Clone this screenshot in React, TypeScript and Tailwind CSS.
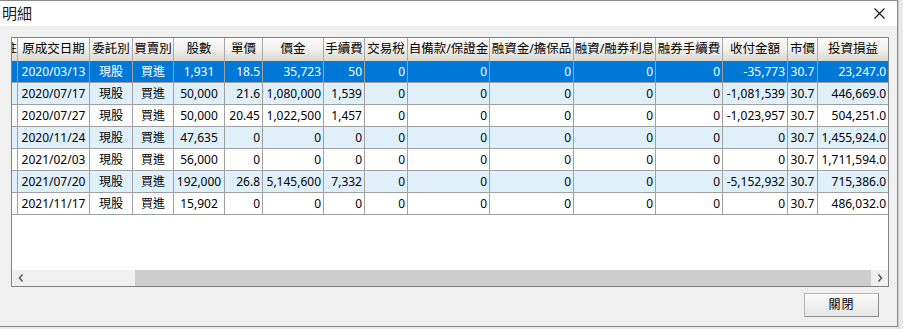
import React from 'react';

const font = { fontFamily: '"Noto Sans", "Noto Sans CJK TC", sans-serif' };

type Col = { title: string; w: string; align: 'c' | 'r' };

const cols: Col[] = [
  { title: '註', w: 'w-[6px]', align: 'r' },
  { title: '原成交日期', w: 'w-[72px]', align: 'c' },
  { title: '委託別', w: 'w-[43px]', align: 'c' },
  { title: '買賣別', w: 'w-[41px]', align: 'c' },
  { title: '股數', w: 'w-[51px]', align: 'c' },
  { title: '單價', w: 'w-[38px]', align: 'r' },
  { title: '價金', w: 'w-[61px]', align: 'r' },
  { title: '手續費', w: 'w-[41px]', align: 'r' },
  { title: '交易稅', w: 'w-[43px]', align: 'r' },
  { title: '自備款/保證金', w: 'w-[82px]', align: 'r' },
  { title: '融資金/擔保品', w: 'w-[84px]', align: 'r' },
  { title: '融資/融券利息', w: 'w-[82px]', align: 'r' },
  { title: '融券手續費', w: 'w-[67px]', align: 'r' },
  { title: '收付金額', w: 'w-[65px]', align: 'r' },
  { title: '市價', w: 'w-[30px]', align: 'c' },
  { title: '投資損益', w: 'w-[70px]', align: 'r' },
];

const rows: string[][] = [
  ['', '2020/03/13', '現股', '買進', '1,931', '18.5', '35,723', '50', '0', '0', '0', '0', '0', '-35,773', '30.7', '23,247.0'],
  ['', '2020/07/17', '現股', '買進', '50,000', '21.6', '1,080,000', '1,539', '0', '0', '0', '0', '0', '-1,081,539', '30.7', '446,669.0'],
  ['', '2020/07/27', '現股', '買進', '50,000', '20.45', '1,022,500', '1,457', '0', '0', '0', '0', '0', '-1,023,957', '30.7', '504,251.0'],
  ['', '2020/11/24', '現股', '買進', '47,635', '0', '0', '0', '0', '0', '0', '0', '0', '0', '30.7', '1,455,924.0'],
  ['', '2021/02/03', '現股', '買進', '56,000', '0', '0', '0', '0', '0', '0', '0', '0', '0', '30.7', '1,711,594.0'],
  ['', '2021/07/20', '現股', '買進', '192,000', '26.8', '5,145,600', '7,332', '0', '0', '0', '0', '0', '-5,152,932', '30.7', '715,386.0'],
  ['', '2021/11/17', '現股', '買進', '15,902', '0', '0', '0', '0', '0', '0', '0', '0', '0', '30.7', '486,032.0'],
];

function HeaderRow() {
  return (
    <div className="flex h-[23px] bg-linear-to-b from-[#fcfcfc] via-[#f1f0ec] to-[#d9d6ce]">
      {cols.map((c, i) => (
        <div
          key={i}
          className={`${c.w} shrink-0 h-full flex items-center justify-center overflow-hidden whitespace-nowrap text-[12.5px] text-black ${
            i < cols.length - 1 ? 'border-r border-[#a9a9a9]' : ''
          } ${i === 0 ? 'justify-end' : ''}`}
        >
          {c.title}
        </div>
      ))}
    </div>
  );
}

function DataRow({ cells, idx }: { cells: string[]; idx: number }) {
  const selected = idx === 0;
  const bg = selected ? 'bg-[#0078d7] text-white' : idx % 2 === 1 ? 'bg-[#dff0fb] text-black' : 'bg-white text-black';
  return (
    <div className={`flex h-[22px] border-b border-[#a0a0a0] ${bg}`}>
      {cols.map((c, i) => (
        <div
          key={i}
          className={`${c.w} shrink-0 h-full flex items-center overflow-hidden whitespace-nowrap text-[12px] ${
            c.align === 'r' ? 'justify-end pr-[2px]' : 'justify-center'
          } ${i < cols.length - 1 ? 'border-r border-[#a0a0a0]' : ''}`}
        >
          {cells[i]}
        </div>
      ))}
    </div>
  );
}

function ScrollBar() {
  return (
    <div className="flex h-[16px] bg-[#f0f0f0]">
      <div className="w-[17px] shrink-0 flex items-center justify-center">
        <svg width="6" height="8" viewBox="0 0 6 8">
          <polyline points="4.5,0.5 1.5,4 4.5,7.5" fill="none" stroke="#606060" strokeWidth="1.6" />
        </svg>
      </div>
      <div className="w-[106px] shrink-0" />
      <div className="w-[736px] shrink-0 bg-[#cdcdcd]" />
      <div className="flex-1 flex items-center justify-center">
        <svg width="6" height="8" viewBox="0 0 6 8">
          <polyline points="1.5,0.5 4.5,4 1.5,7.5" fill="none" stroke="#606060" strokeWidth="1.6" />
        </svg>
      </div>
    </div>
  );
}

export default function App() {
  return (
    <div className="w-[903px] h-[329px] bg-[#e9e9e9] flex overflow-hidden" style={font}>
      <div className="w-[898px] h-[327px] shrink-0 flex flex-col border-t border-r border-b border-[#8a8a8a]">
        <div className="h-[25px] bg-white flex items-center justify-between pl-[2px] pr-[12px]">
          <span className="text-[15px] text-[#1a1a1a] leading-none">明細</span>
          <svg width="11" height="11" viewBox="0 0 11 11">
            <path d="M0.5 0.5 L10.5 10.5 M10.5 0.5 L0.5 10.5" stroke="#111" strokeWidth="1.1" />
          </svg>
        </div>
        <div className="flex-1 bg-[#f0f0f0] pt-[11px] pl-[11px] flex flex-col">
          <div className="w-[878px] h-[250px] border border-[#828282] bg-white flex flex-col">
            <HeaderRow />
            {rows.map((r, i) => (
              <DataRow key={i} cells={r} idx={i} />
            ))}
            <div className="flex-1 bg-white" />
            <ScrollBar />
          </div>
          <div className="flex justify-end pr-[18px] mt-[6px]">
            <button className="w-[75px] h-[24px] border border-[#b5b5b5] border-r-[#8f8f8f] border-b-[#8f8f8f] bg-linear-to-b from-[#fbfbfb] to-[#e6e6e6] text-[12px] text-black flex items-center justify-center tracking-[1px]">
              關閉
            </button>
          </div>
        </div>
      </div>
      <div className="flex-1 flex">
        <div className="w-[1px] h-full bg-[#cfcfcf]" />
      </div>
    </div>
  );
}
